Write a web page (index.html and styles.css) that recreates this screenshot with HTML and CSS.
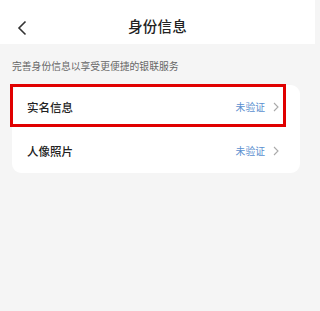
FILE: index.html
```html
<!DOCTYPE html>
<html lang="zh-CN">
<head>
<meta charset="utf-8">
<link rel="stylesheet" href="styles.css">
</head>
<body>
<div class="page">
  <header class="nav">
    <svg class="back" width="10" height="16" viewBox="0 0 10 16"><path d="M8.5 1.5 L2 8 L8.5 14.5" fill="none" stroke="#333" stroke-width="1.6"/></svg>
    <div class="title">身份信息</div>
  </header>
  <p class="intro">完善身份信息以享受更便捷的银联服务</p>
  <div class="card">
    <div class="row">
      <span class="label">实名信息</span>
      <span class="status">未验证</span>
      <svg class="chev" width="6" height="10" viewBox="0 0 6 10"><path d="M1 1 L5 5 L1 9" fill="none" stroke="#aaa" stroke-width="1.1"/></svg>
      <div class="highlight"></div>
    </div>
    <div class="row">
      <span class="label">人像照片</span>
      <span class="status">未验证</span>
      <svg class="chev" width="6" height="10" viewBox="0 0 6 10"><path d="M1 1 L5 5 L1 9" fill="none" stroke="#aaa" stroke-width="1.1"/></svg>
    </div>
  </div>
</div>
</body>
</html>
```

FILE: styles.css
```css
html, body {
  margin: 0;
  padding: 0;
  background: #f5f5f5;
  font-family: "Noto Sans CJK SC", "Noto Sans", sans-serif;
}
.page {
  width: 315px;
  height: 311px;
  background: #f5f5f5;
}
.nav {
  position: relative;
  height: 44px;
  background: #fff;
  display: flex;
  align-items: center;
  justify-content: center;
}
.back {
  position: absolute;
  left: 17px;
  top: 20px;
}
.title {
  font-size: 14.5px;
  font-weight: 500;
  color: #222;
  letter-spacing: 0.3px;
  margin-top: 7px;
}
.intro {
  margin: 0;
  padding: 15px 12px 0;
  height: 26px;
  font-size: 9.8px;
  color: #666;
  line-height: 14px;
}
.card {
  margin: 0 15px 0 12px;
  background: #fff;
  border-radius: 9px;
}
.row {
  position: relative;
  height: 44px;
  display: flex;
  align-items: center;
  padding: 0 21px 0 15px;
}
.label {
  flex: 1;
  font-size: 11.5px;
  font-weight: 500;
  color: #222;
}
.status {
  font-size: 9.8px;
  color: #5b8fcf;
  margin-right: 8px;
}
.chev {
  display: block;
}
.highlight {
  position: absolute;
  left: -2px;
  top: -1px;
  width: 270px;
  height: 37px;
  border: 3px solid #e00000;
}
```
